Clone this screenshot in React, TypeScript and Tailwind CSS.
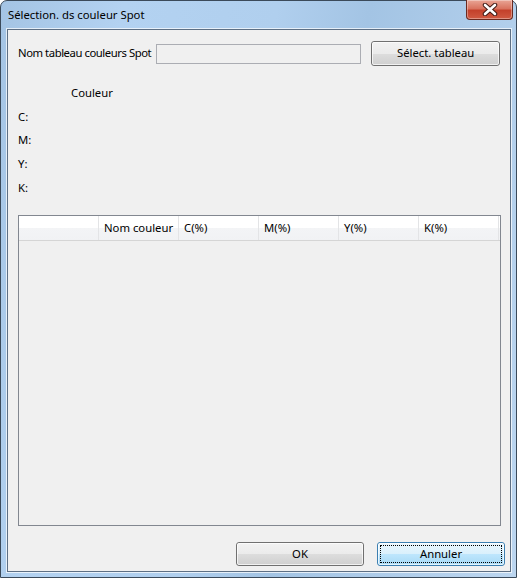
import React from "react";

const font = { fontFamily: '"Noto Sans", "Open Sans", sans-serif' };

function CloseButton() {
  return (
    <div className="-mr-[2px] -mt-px flex h-[20px] w-[47px] items-center justify-center rounded-b-[4px] border border-t-0 border-[#6b2a20] bg-[linear-gradient(to_bottom,#e9a595_0%,#d9735f_45%,#c4412b_55%,#d05a42_100%)] shadow-[inset_0_0_0_1px_rgba(255,255,255,0.35)]">
      <svg width="16" height="13" viewBox="0 0 16 13">
        <path d="M3 2 L13 11 M13 2 L3 11" stroke="#3d1712" strokeWidth="4.5" strokeLinecap="round" />
        <path d="M3 2 L13 11 M13 2 L3 11" stroke="#ffffff" strokeWidth="2.6" strokeLinecap="round" />
      </svg>
    </div>
  );
}

function Button({ label, focused, className }: { label: string; focused?: boolean; className?: string }) {
  return (
    <div
      className={
        "relative flex items-center justify-center rounded-[3px] border text-[11.3px] text-black " +
        (focused
          ? "border-[#3c7fb1] bg-[linear-gradient(to_bottom,#eaf6fd_0%,#d9f0fc_50%,#bee6fd_51%,#a7d9f5_100%)] "
          : "border-[#707070] bg-[linear-gradient(to_bottom,#f2f2f2_0%,#ebebeb_50%,#dddddd_51%,#cfcfcf_100%)] ") +
        (className ?? "")
      }
    >
      <div className="absolute inset-0 rounded-[2px] border border-white/70" />
      {focused ? <div className="absolute inset-[2px] border border-dotted border-black" /> : null}
      <span className="relative">{label}</span>
    </div>
  );
}

const columns = ["", "Nom couleur", "C(%)", "M(%)", "Y(%)", "K(%)"];

export default function App() {
  return (
    <div
      className="flex h-[578px] w-[517px] flex-col rounded-t-[7px] border border-[#3b4a5a] bg-[linear-gradient(100deg,#a4c4e4_0%,#b3d2f1_20%,#b0cfee_45%,#a3c4e4_60%,#bcd6f0_100%)] pb-[5px] pl-[6px] pr-[5px] text-[#1e1e1e]"
      style={font}
    >
      <div className="flex h-[28px] shrink-0 items-start justify-between">
        <span className="pl-px pt-[6px] text-[11.3px] leading-[16px] text-black">Sélection. ds couleur Spot</span>
        <CloseButton />
      </div>

      <div className="flex flex-1 flex-col border border-[#5d6f84] bg-[#f0f0f0] px-[10px] pt-[11px] shadow-[0_0_0_1px_rgba(255,255,255,0.7)]">
        <div className="flex h-[25px] items-center text-[11.3px]">
          <span className="w-[138px] whitespace-nowrap tracking-[-0.45px] text-black">Nom tableau couleurs Spot</span>
          <div className="h-[20px] w-[206px] border border-[#abadb3] bg-[#f0f0f0]" />
          <Button label="Sélect. tableau" className="ml-[10px] h-[25px] w-[129px]" />
        </div>

        <div className="mt-[15px] flex flex-col text-[11.3px] text-black">
          <div className="flex h-[24px] items-center pl-[53px]">Couleur</div>
          <div className="flex h-[24px] items-center">C:</div>
          <div className="flex h-[23px] items-center">M:</div>
          <div className="flex h-[24px] items-center">Y:</div>
          <div className="flex h-[24px] items-center">K:</div>
        </div>

        <div className="mt-[15px] h-[311px] w-[483px] border border-[#828790] bg-[#f0f0f0]">
          <div className="flex h-[25px] border-b border-[#d5d5d5] bg-[linear-gradient(to_bottom,#ffffff_0%,#ffffff_50%,#f3f4f6_51%,#f1f2f4_100%)]">
            {columns.map((c, i) => (
              <div
                key={i}
                className="flex h-full w-[80px] shrink-0 items-center border-r border-[#e3e4e6] pl-[5px] text-[11.3px] text-black"
              >
                {c}
              </div>
            ))}
          </div>
        </div>

        <div className="-mr-[5px] mt-[16px] flex justify-end gap-[13px]">
          <Button label="OK" className="h-[24px] w-[128px]" />
          <Button label="Annuler" focused className="h-[24px] w-[128px]" />
        </div>
      </div>
    </div>
  );
}
